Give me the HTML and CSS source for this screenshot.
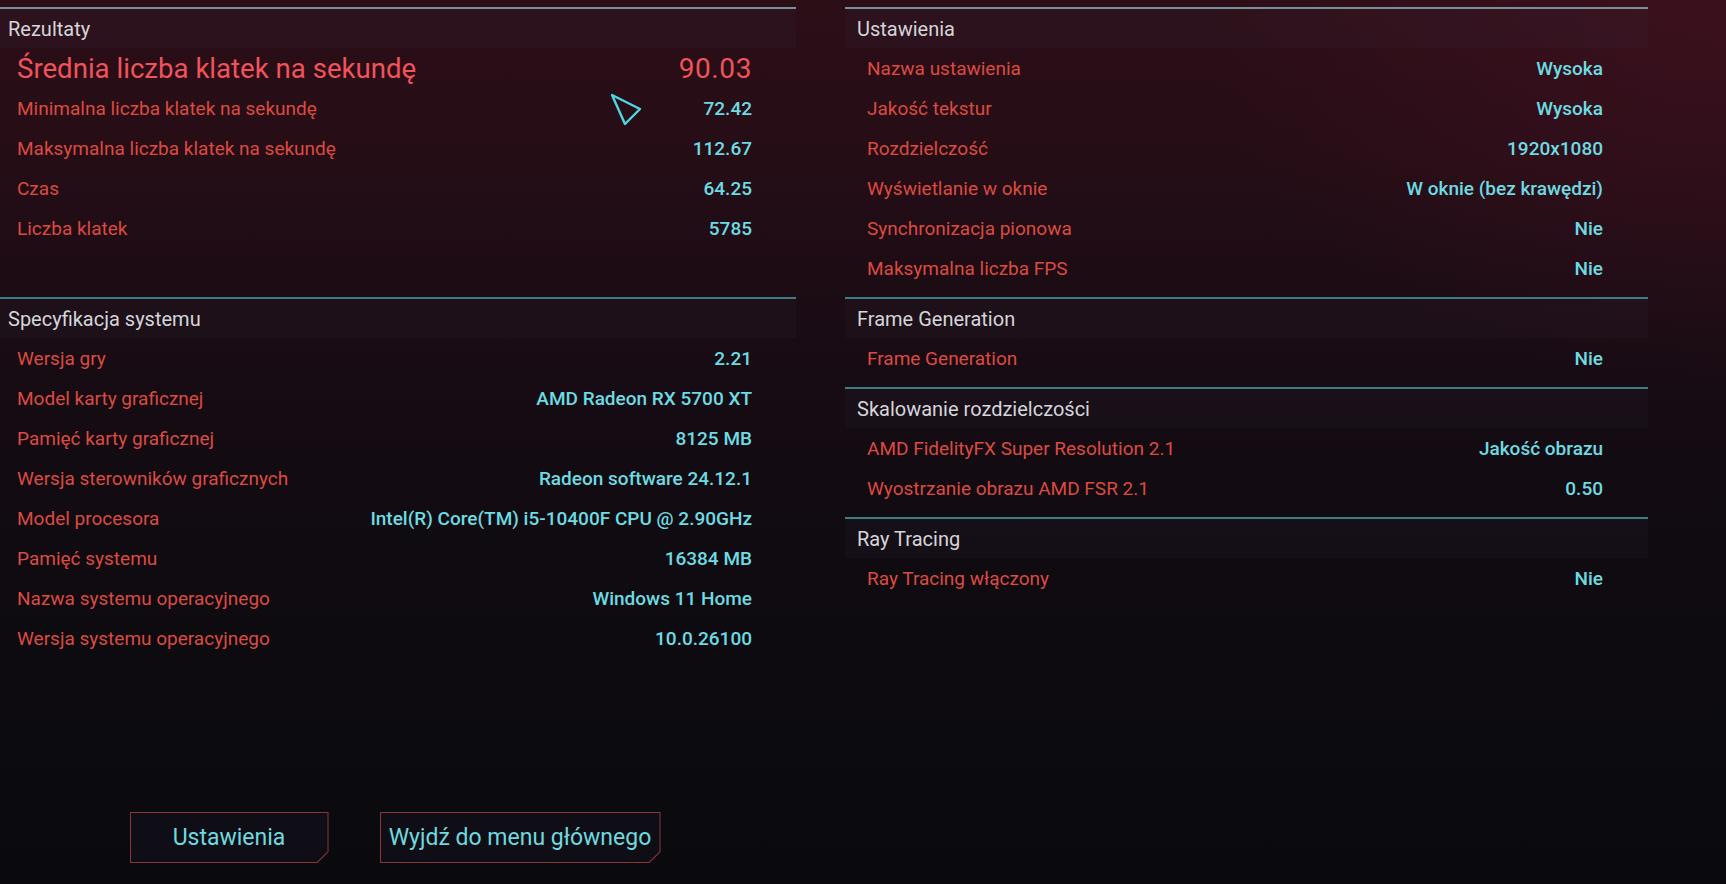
FILE: index.html
```html
<!DOCTYPE html>
<html lang="pl">
<head>
<meta charset="utf-8">
<title>Wyniki testu porównawczego</title>
<link rel="stylesheet" href="styles.css">
</head>
<body>
<div class="screen">
  <div class="col col-left">
    <section class="group group-first group-results">
      <div class="group-head">Rezultaty</div>
      <div class="row row-main"><span class="label">Średnia liczba klatek na sekundę</span><span class="value">90.03</span></div>
      <div class="row"><span class="label">Minimalna liczba klatek na sekundę</span><span class="value">72.42</span></div>
      <div class="row"><span class="label">Maksymalna liczba klatek na sekundę</span><span class="value">112.67</span></div>
      <div class="row"><span class="label">Czas</span><span class="value">64.25</span></div>
      <div class="row"><span class="label">Liczba klatek</span><span class="value">5785</span></div>
    </section>
    <section class="group">
      <div class="group-head">Specyfikacja systemu</div>
      <div class="row"><span class="label">Wersja gry</span><span class="value">2.21</span></div>
      <div class="row"><span class="label">Model karty graficznej</span><span class="value">AMD Radeon RX 5700 XT</span></div>
      <div class="row"><span class="label">Pamięć karty graficznej</span><span class="value">8125 MB</span></div>
      <div class="row"><span class="label">Wersja sterowników graficznych</span><span class="value">Radeon software 24.12.1</span></div>
      <div class="row"><span class="label">Model procesora</span><span class="value">Intel(R) Core(TM) i5-10400F CPU @ 2.90GHz</span></div>
      <div class="row"><span class="label">Pamięć systemu</span><span class="value">16384 MB</span></div>
      <div class="row"><span class="label">Nazwa systemu operacyjnego</span><span class="value">Windows 11 Home</span></div>
      <div class="row"><span class="label">Wersja systemu operacyjnego</span><span class="value">10.0.26100</span></div>
    </section>
    <div class="actions">
      <button class="btn btn-settings"><span class="btn-inner">Ustawienia</span></button>
      <button class="btn btn-exit"><span class="btn-inner">Wyjdź do menu głównego</span></button>
    </div>
  </div>

  <div class="col col-right">
    <section class="group group-first">
      <div class="group-head">Ustawienia</div>
      <div class="row"><span class="label">Nazwa ustawienia</span><span class="value">Wysoka</span></div>
      <div class="row"><span class="label">Jakość tekstur</span><span class="value">Wysoka</span></div>
      <div class="row"><span class="label">Rozdzielczość</span><span class="value">1920x1080</span></div>
      <div class="row"><span class="label">Wyświetlanie w oknie</span><span class="value">W oknie (bez krawędzi)</span></div>
      <div class="row"><span class="label">Synchronizacja pionowa</span><span class="value">Nie</span></div>
      <div class="row"><span class="label">Maksymalna liczba FPS</span><span class="value">Nie</span></div>
    </section>
    <section class="group">
      <div class="group-head">Frame Generation</div>
      <div class="row"><span class="label">Frame Generation</span><span class="value">Nie</span></div>
    </section>
    <section class="group">
      <div class="group-head">Skalowanie rozdzielczości</div>
      <div class="row"><span class="label">AMD FidelityFX Super Resolution 2.1</span><span class="value">Jakość obrazu</span></div>
      <div class="row"><span class="label">Wyostrzanie obrazu AMD FSR 2.1</span><span class="value">0.50</span></div>
    </section>
    <section class="group group-last">
      <div class="group-head">Ray Tracing</div>
      <div class="row"><span class="label">Ray Tracing włączony</span><span class="value">Nie</span></div>
    </section>
  </div>

  <svg class="cursor" width="40" height="40" viewBox="0 0 40 40" aria-hidden="true">
    <polygon points="4,4 32,18 17,33" fill="none" stroke="#4fd6e2" stroke-width="2.4" stroke-linejoin="round"/>
  </svg>
</div>
</body>
</html>
```

FILE: styles.css
```css
* { box-sizing: border-box; }

html, body {
  margin: 0;
  padding: 0;
  background: #0a0a0f;
}

body {
  font-family: Roboto, "Liberation Sans", sans-serif;
}

.screen {
  position: relative;
  display: flex;
  width: 1726px;
  height: 884px;
  overflow: hidden;
  background:
    radial-gradient(ellipse 700px 520px at 1726px 0, rgba(72, 18, 34, 0.55), rgba(72, 18, 34, 0) 75%),
    linear-gradient(180deg, #2c0e17 0%, #250d16 18%, #1a0c14 36%, #120b12 55%, #0d0b10 75%, #0a0a0e 100%);
}

.col {
  display: flex;
  flex-direction: column;
}

.col-left {
  width: 796px;
  padding-top: 7px;
}

.col-right {
  width: 803px;
  margin-left: 49px;
  padding-top: 7px;
}

.group {
  border-top: 2px solid #3f7d83;
  padding-bottom: 9px;
}

.group-first {
  border-top-color: #7b8f96;
}

.group-results {
  padding-bottom: 49px;
}

.group-head {
  height: 39px;
  display: flex;
  align-items: center;
  font-size: 20px;
  color: #d5d5da;
  background: rgba(60, 60, 80, 0.1);
}

.col-left .group-head { padding-left: 8px; }
.col-right .group-head { padding-left: 12px; }

.row {
  height: 40px;
  display: flex;
  align-items: center;
  justify-content: space-between;
  font-size: 19px;
}

.col-left .row { padding: 0 44px 0 17px; }
.col-right .row { padding: 0 45px 0 22px; }

.label {
  color: #dc4a41;
}

.value {
  color: #6ddbe2;
  font-weight: 500;
}

.row-main {
  font-size: 27.6px;
}

.row-main .label {
  color: #f0535a;
}

.row-main .value {
  color: #ee5359;
  font-weight: 400;
  font-size: 28px;
  letter-spacing: 0.6px;
}

.actions {
  margin-top: auto;
  margin-bottom: 21px;
  display: flex;
  justify-content: center;
  gap: 51px;
  padding-right: 6px;
}

.btn {
  height: 51px;
  padding: 1px;
  border: 0;
  margin: 0;
  background: #8c3539;
  clip-path: polygon(0 0, 100% 0, 100% calc(100% - 11px), calc(100% - 11px) 100%, 0 100%);
  font-family: inherit;
  cursor: pointer;
}

.btn-settings { width: 199px; }
.btn-exit { width: 281px; }

.btn-inner {
  display: flex;
  align-items: center;
  justify-content: center;
  width: 100%;
  height: 100%;
  background: #0f0e16;
  clip-path: polygon(0 0, 100% 0, 100% calc(100% - 10.5px), calc(100% - 10.5px) 100%, 0 100%);
  color: #6fd9df;
  font-size: 23px;
}

.cursor {
  position: absolute;
  left: 608px;
  top: 91px;
}
```
